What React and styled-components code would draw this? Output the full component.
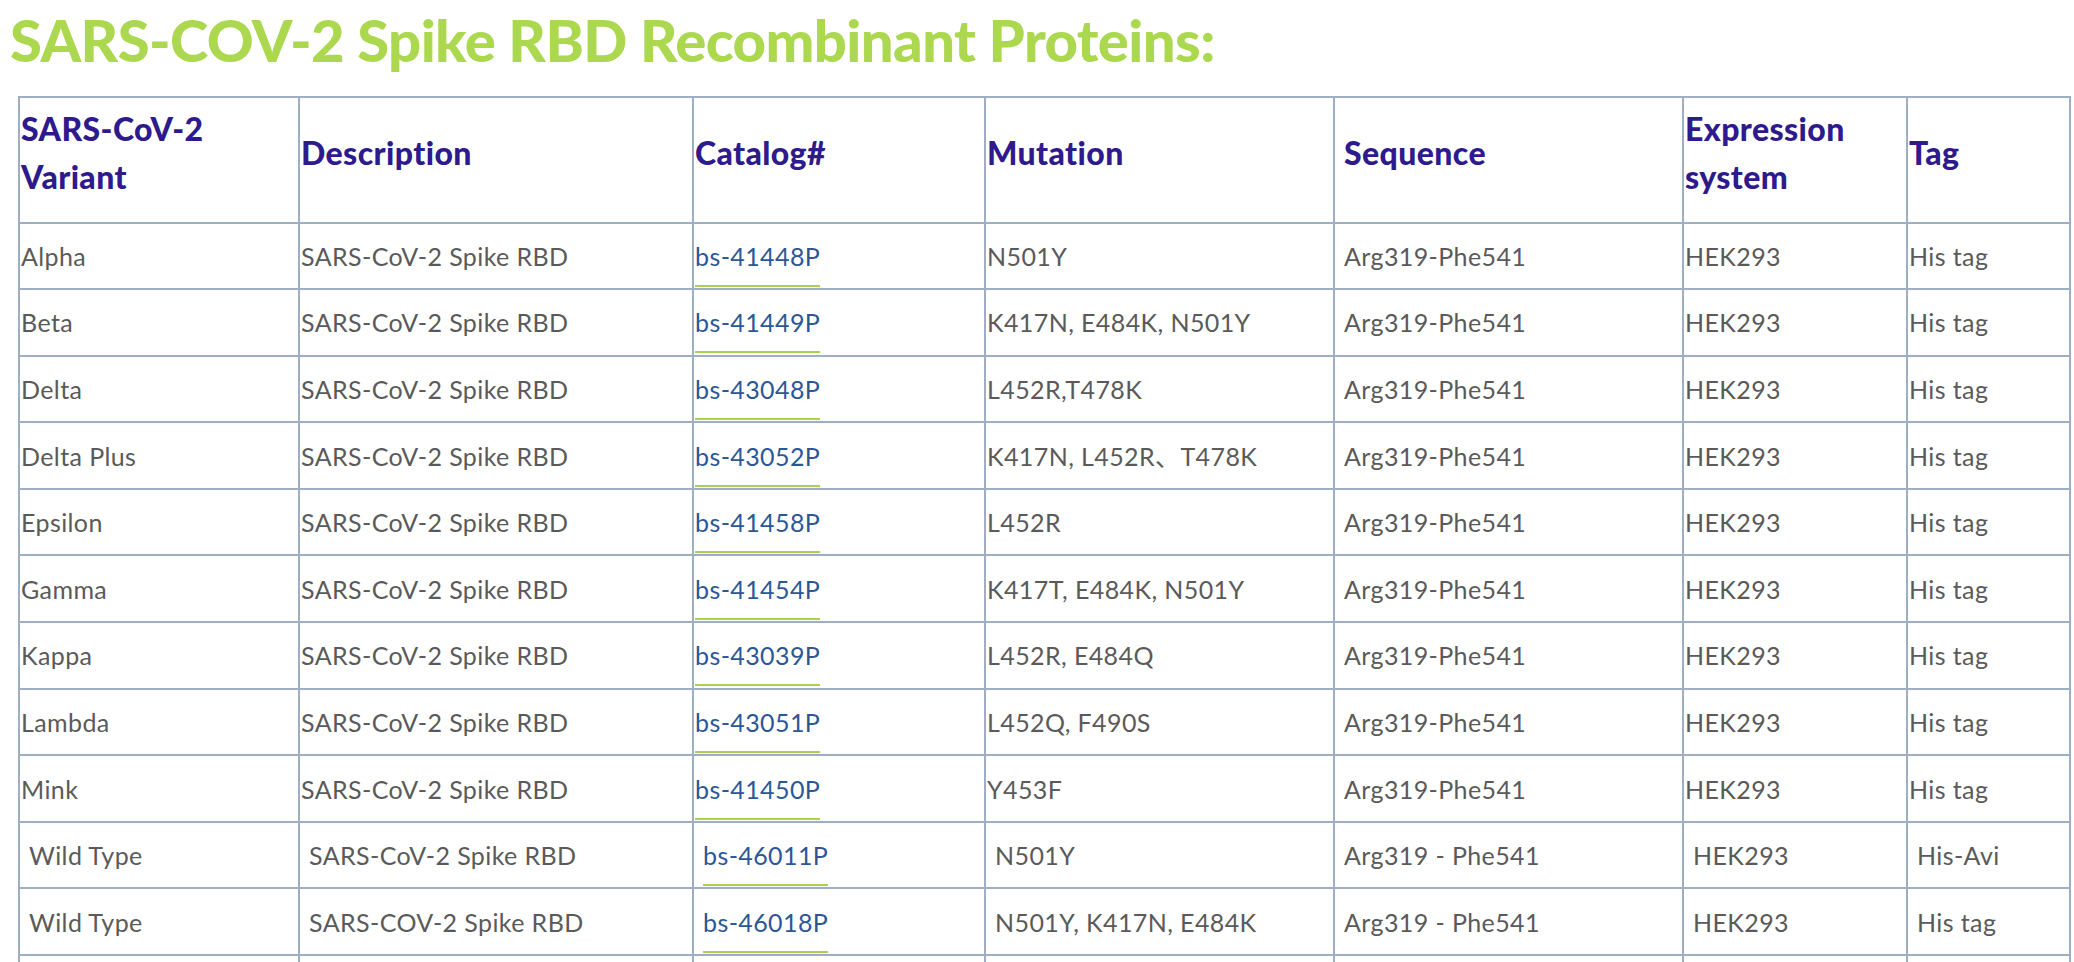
import styled, { createGlobalStyle } from "styled-components";

const GlobalStyle = createGlobalStyle`
  html, body {
    margin: 0;
    padding: 0;
    background: #fff;
  }
`;

const Page = styled.div`
  padding: 4px 5px 0 10px;
`;

const Title = styled.h2`
  margin: 0 0 20px 0;
  font-family: Lato, "Liberation Sans", sans-serif;
  font-weight: 900;
  font-size: 58px;
  line-height: 72px;
  letter-spacing: -0.6px;
  color: #acd84f;
`;

const Table = styled.table`
  margin-left: 8px;
  width: 2051px;
  table-layout: fixed;
  border-collapse: collapse;
  font-family: Lato, "Liberation Sans", "Noto Sans CJK SC", sans-serif;
`;

const Th = styled.th`
  height: 110.5px;
  padding: 0 1px 13px ${(p) => (p.$indent ? "9px" : "1px")};
  border: 2px solid #9eaec4;
  text-align: left;
  vertical-align: middle;
  font-weight: 900;
  font-size: 32px;
  line-height: 48px;
  letter-spacing: 0.4px;
  color: #2e1a8c;
`;

const Td = styled.td`
  height: 64.6px;
  padding: 0 1px 0 ${(p) => (p.$indent ? "9px" : "1px")};
  border: 2px solid #9eaec4;
  vertical-align: middle;
  font-size: 25px;
  line-height: 30px;
  letter-spacing: 0.4px;
  color: #5a5a5a;
  white-space: nowrap;
`;

const CatLink = styled.a`
  color: #2b5797;
  text-decoration: none;
  padding-bottom: 14px;
  border-bottom: 2px solid #acd04f;
`;

const widths = [280, 394, 292, 349, 349, 224, 163];

// the Sequence column carries its own left inset on every row
const SEQ = 4;

const headers = [
  ["SARS-CoV-2", "Variant"],
  ["Description"],
  ["Catalog#"],
  ["Mutation"],
  ["Sequence"],
  ["Expression", "system"],
  ["Tag"],
];

const rows = [
  ["Alpha", "SARS-CoV-2 Spike RBD", "bs-41448P", "N501Y", "Arg319-Phe541", "HEK293", "His tag"],
  ["Beta", "SARS-CoV-2 Spike RBD", "bs-41449P", "K417N, E484K, N501Y", "Arg319-Phe541", "HEK293", "His tag"],
  ["Delta", "SARS-CoV-2 Spike RBD", "bs-43048P", "L452R,T478K", "Arg319-Phe541", "HEK293", "His tag"],
  ["Delta Plus", "SARS-CoV-2 Spike RBD", "bs-43052P", "K417N, L452R、T478K", "Arg319-Phe541", "HEK293", "His tag"],
  ["Epsilon", "SARS-CoV-2 Spike RBD", "bs-41458P", "L452R", "Arg319-Phe541", "HEK293", "His tag"],
  ["Gamma", "SARS-CoV-2 Spike RBD", "bs-41454P", "K417T, E484K, N501Y", "Arg319-Phe541", "HEK293", "His tag"],
  ["Kappa", "SARS-CoV-2 Spike RBD", "bs-43039P", "L452R, E484Q", "Arg319-Phe541", "HEK293", "His tag"],
  ["Lambda", "SARS-CoV-2 Spike RBD", "bs-43051P", "L452Q, F490S", "Arg319-Phe541", "HEK293", "His tag"],
  ["Mink", "SARS-CoV-2 Spike RBD", "bs-41450P", "Y453F", "Arg319-Phe541", "HEK293", "His tag"],
  ["Wild Type", "SARS-CoV-2 Spike RBD", "bs-46011P", "N501Y", "Arg319 - Phe541", "HEK293", "His-Avi", true],
  ["Wild Type", "SARS-COV-2 Spike RBD", "bs-46018P", "N501Y, K417N, E484K", "Arg319 - Phe541", "HEK293", "His tag", true],
];

export default function App() {
  return (
    <Page>
      <GlobalStyle />
      <Title>SARS-COV-2 Spike RBD Recombinant Proteins:</Title>
      <Table>
        <colgroup>
          {widths.map((w, i) => (
            <col key={i} style={{ width: w }} />
          ))}
        </colgroup>
        <thead>
          <tr>
            {headers.map((h, i) => (
              <Th key={i} $indent={i === SEQ}>
                {h.map((line, j) => (
                  <span key={j}>
                    {j > 0 && <br />}
                    {line}
                  </span>
                ))}
              </Th>
            ))}
          </tr>
        </thead>
        <tbody>
          {rows.map((r, i) => (
            <tr key={i}>
              {r.slice(0, 7).map((cell, c) => (
                <Td key={c} $indent={c === SEQ || r[7]}>
                  {c === 2 ? <CatLink href="#">{cell}</CatLink> : cell}
                </Td>
              ))}
            </tr>
          ))}
          <tr>
            {widths.map((w, i) => (
              <Td key={i}>&nbsp;</Td>
            ))}
          </tr>
        </tbody>
      </Table>
    </Page>
  );
}
